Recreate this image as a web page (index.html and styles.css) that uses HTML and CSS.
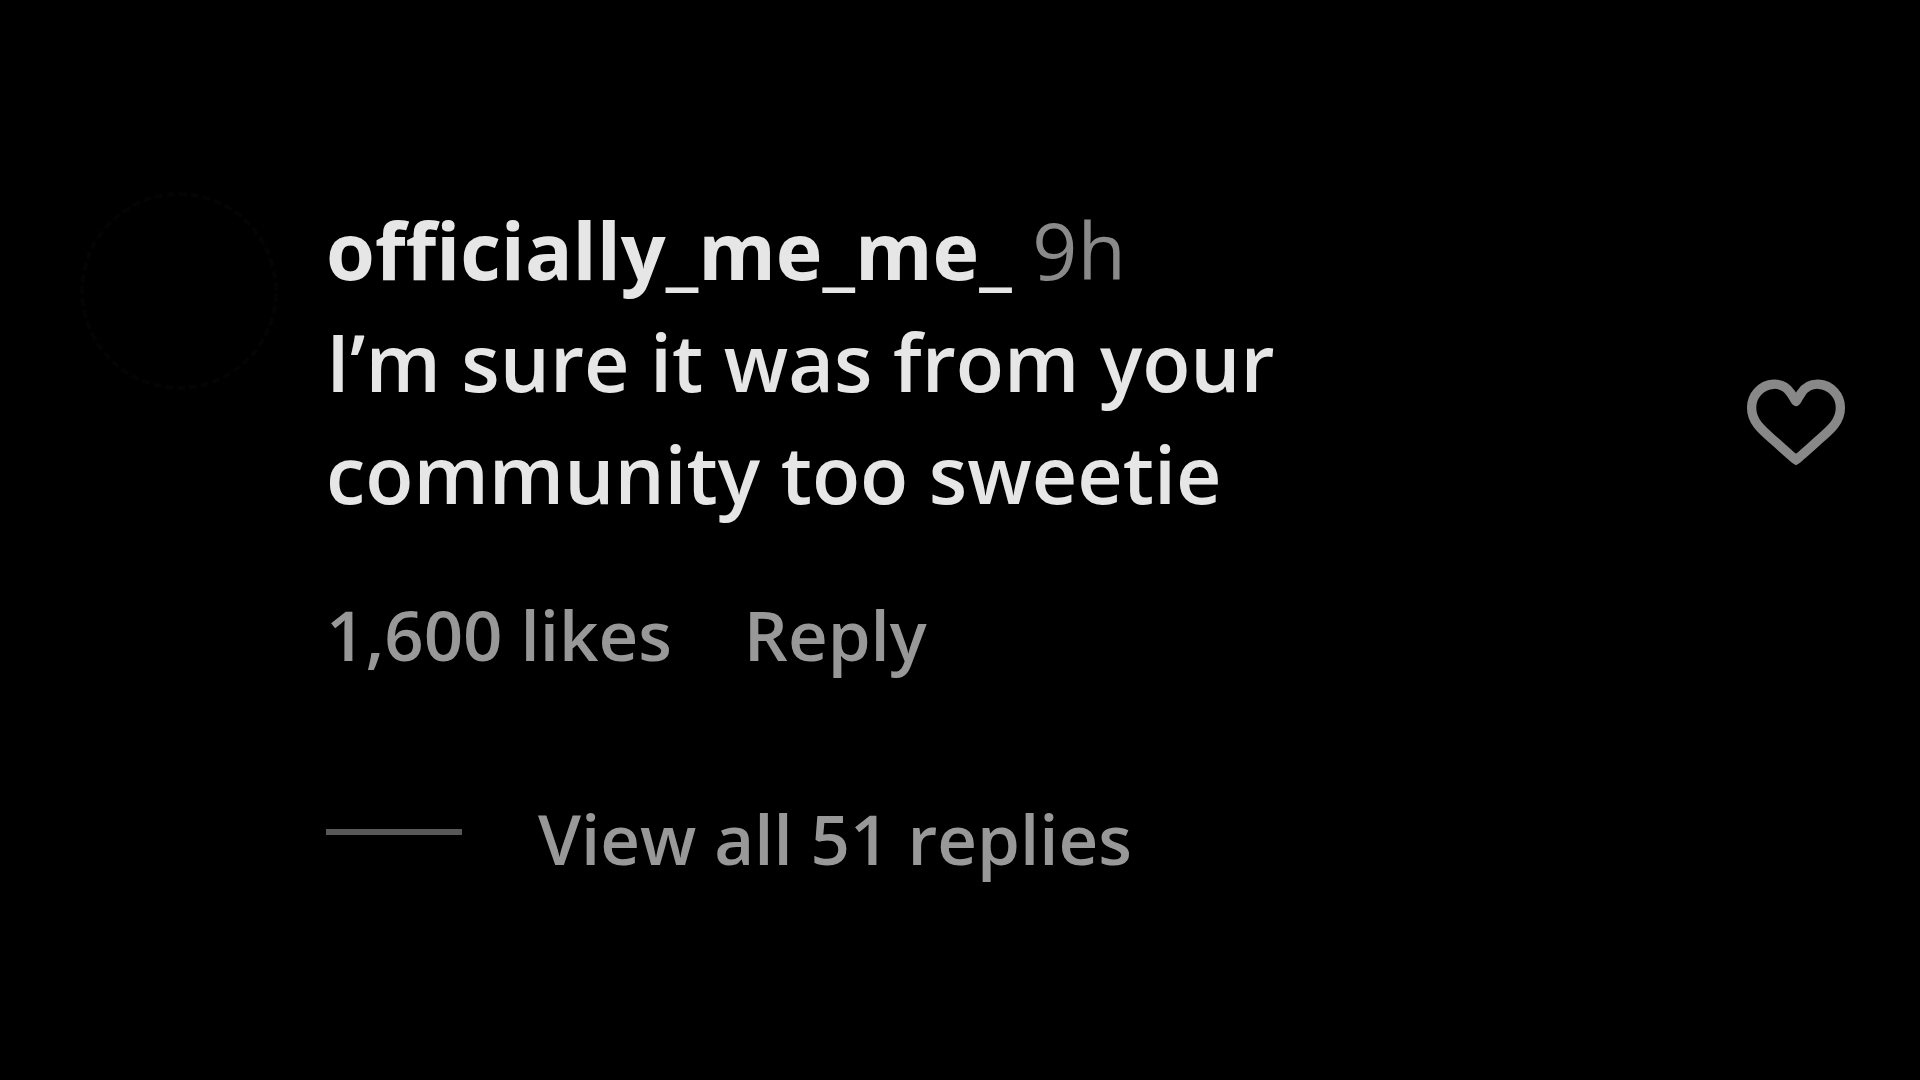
FILE: index.html
```html
<!DOCTYPE html>
<html lang="en">
<head>
<meta charset="utf-8">
<title>Comment</title>
<link rel="stylesheet" href="styles.css">
</head>
<body>
<article class="comment">
  <div class="avatar"></div>
  <div class="content">
    <div class="main">
      <header class="byline"><a class="author" href="#">officially_me_me_</a> <time class="age">9h</time></header>
      <p class="message">I’m sure it was from your<br>community too sweetie</p>
    </div>
    <div class="actions">
      <button class="action" type="button">1,600 likes</button>
      <button class="action" type="button">Reply</button>
    </div>
    <button class="replies" type="button"><span class="rule"></span><span>View all 51 replies</span></button>
  </div>
  <button class="like" type="button" aria-label="Like">
    <svg class="heart" viewBox="0 0 24 24" aria-hidden="true"><path d="M16.792 3.904A4.989 4.989 0 0 1 21.5 9.122c0 3.072-2.652 4.959-5.197 7.222-2.512 2.243-3.865 3.469-4.303 3.752-.477-.309-2.143-1.823-4.303-3.752C5.141 14.072 2.5 12.167 2.5 9.122a4.989 4.989 0 0 1 4.708-5.218 4.21 4.21 0 0 1 3.675 1.941c.84 1.175.98 1.763 1.12 1.763s.278-.588 1.11-1.766a4.17 4.17 0 0 1 3.679-1.938Z"/></svg>
  </button>
</article>
</body>
</html>
```
FILE: styles.css
```css
body {
  margin: 0;
  background: #000;
  color: #e6e6e6;
  font-family: "Open Sans", "Noto Sans", sans-serif;
}

.comment {
  display: flex;
  align-items: flex-start;
  padding: 192px 68px 0 80px;
}

.avatar {
  box-sizing: border-box;
  width: 198px;
  height: 198px;
  flex: none;
  border: 4px dashed #040404;
  border-radius: 50%;
}

.content {
  flex: 1;
  margin-left: 48px;
  padding-top: 2px;
}

.byline,
.message {
  margin: 0;
  font-size: 79px;
  line-height: 112px;
}

.message {
  font-weight: 600;
}

.author {
  color: inherit;
  font-weight: 700;
  text-decoration: none;
}

.age {
  color: #8a8a8a;
}

button {
  padding: 0;
  border: 0;
  background: none;
  color: #989898;
  font: inherit;
  cursor: pointer;
}

.actions {
  display: flex;
  gap: 72px;
  margin-top: 56px;
}

.action,
.replies {
  font-size: 69px;
  font-weight: 600;
  line-height: 96px;
}

.replies {
  display: flex;
  align-items: center;
  gap: 76px;
  margin-top: 108px;
}

.rule {
  width: 136px;
  height: 6px;
  margin-bottom: 12px;
  background: #585858;
}

.like {
  flex: none;
  margin-top: 174px;
}

.heart {
  display: block;
  width: 112px;
  height: 112px;
  fill: none;
  stroke: #888;
  stroke-width: 2;
}
```
